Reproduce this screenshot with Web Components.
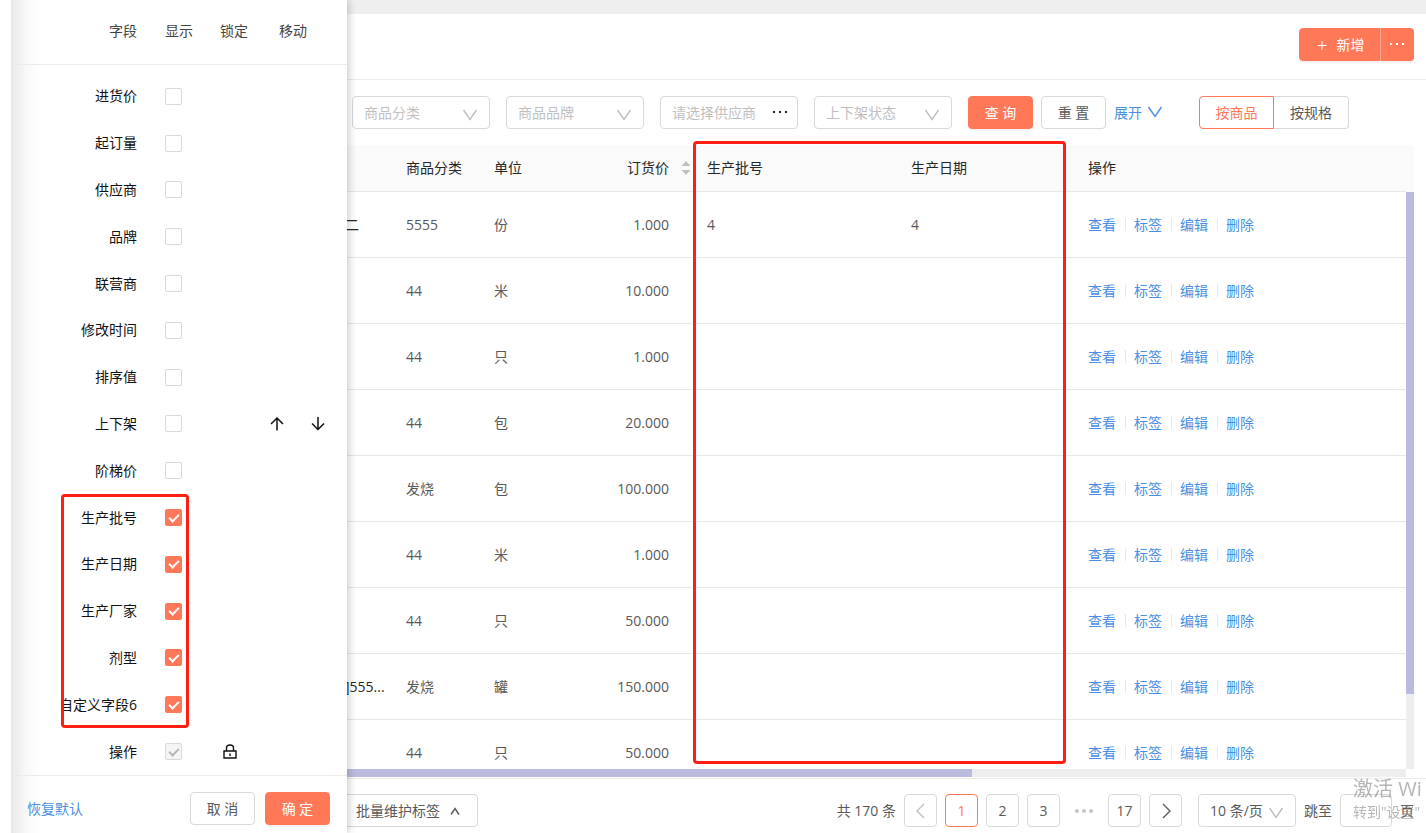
<!DOCTYPE html>
<html lang="zh-CN">
<head>
<meta charset="utf-8">
<meta name="viewport" content="width=device-width, initial-scale=1">
<title>商品列表</title>
<style>
	html, body {
		margin: 0;
		height: 100%;
	}
	body {
		--primary: #ff7858;
		--link: #4a90e2;
		--line: #e8e8e8;
		--border: #d9d9d9;
		--text: #595959;
		background: #fff;
		color: var(--text);
		font: 14px/20px "Open Sans", "Noto Sans CJK SC", sans-serif;
		overflow: hidden;
	}
</style>
</head>
<body>
<goods-app></goods-app>

<script>
class BaseElement extends HTMLElement {
	constructor() {
		super();

		this.attachShadow({ mode: "open" });
		this.shadowRoot.appendChild(this.constructor.template.content.cloneNode(true));
	}

	static get template() {
		const tmpl = document.createElement("template");
		tmpl.innerHTML = this.html;
		return tmpl;
	}
}

const ICONS = {
	down: `<path d="M.5 4 7 13.500l6.500-9.500"/>`,
	expand: `<path d="M.5 1 7 10.500 13.500 1"/>`,
	up: `<path d="M3 10.500 7 4.500l4 6"/>`,
	left: `<path d="M10 0 3 7l7 7"/>`,
	right: `<path d="M4 0l7 7-7 7"/>`,
	plus: `<path d="M7 3v9M2.500 7.500h9" stroke-width="1"/>`,
	arrowUp: `<path d="M7 13.500V1M1 7l6-6 6 6" stroke-width="1.500"/>`,
	arrowDown: `<path d="M7 0v12.500M1 6.500l6 6 6-6" stroke-width="1.500"/>`,
	lock: `<path d="M1 6h12v7H1zM3.500 6V3Q3.500 0 7 0t3.500 3v3M7 8.500V11" stroke-width="1.400"/>`,
	dots: `<path d="M0 5h2v2H0zM6 5h2v2H6zM12 5h2v2h-2z" fill="currentColor" stroke="none"/>`,
	ellipsis: `<g fill="currentColor" stroke="none"><circle cx="2" cy="7" r="2"/><circle cx="9" cy="7" r="2"/><circle cx="16" cy="7" r="2"/></g>`,
};

class UiIcon extends BaseElement {
	connectedCallback() {
		const name = this.getAttribute("name");
		const width = name === "ellipsis" ? 18 : 14;
		this.shadowRoot.querySelector("span").innerHTML =
			`<svg width="${width}" height="14" viewBox="0 0 ${width} 14" aria-hidden="true">${ICONS[name]}</svg>`;
	}

	static get html() {
		return /* html */`
		<style>
		:host { display: inline-flex; }
		span { display: flex; }
		svg {
			fill: none;
			stroke: currentColor;
			stroke-width: 1.4;
			overflow: visible;
		}
		</style>
		<span></span>`;
	}
}
customElements.define("ui-icon", UiIcon);

class UiButton extends BaseElement {
	connectedCallback() {
		const label = this.getAttribute("label");
		if (label) this.shadowRoot.querySelector("button").setAttribute("aria-label", label);
	}

	static get html() {
		return /* html */`
		<style>
		:host { display: inline-flex; height: 33px; }
		button {
			display: flex;
			align-items: center;
			justify-content: center;
			gap: 8px;
			width: 100%;
			height: 100%;
			box-sizing: border-box;
			padding: 0 15px;
			border: 1px solid var(--border);
			border-radius: 4px;
			background: #fff;
			color: var(--text);
			font: inherit;
			white-space: nowrap;
			cursor: pointer;
		}
		:host([kind="primary"]) button {
			border-color: var(--primary);
			background: var(--primary);
			color: #fff;
			box-shadow: 0 2px 2px rgba(0, 0, 0, 0.06);
		}
		:host([kind="outline"]) button {
			border-color: var(--primary);
			color: var(--primary);
		}
		:host([kind="link"]) button {
			border: 0;
			padding: 0;
			gap: 6px;
			background: none;
			color: var(--link);
		}
		:host([square]) { width: 33px; }
		:host([square]) button { padding: 0; }
		:host([wide]) { width: 65px; }
		:host([join="start"]) button { border-radius: 4px 0 0 4px; }
		:host([join="end"]) button { border-radius: 0 4px 4px 0; }
		:host([join="end"]:not([kind])) button { border-left: 0; }
		:host([join="end"][kind]) button { border-left-color: #ffa995; }
		:host([muted]) button { color: #bfbfbf; }
		</style>
		<button type="button"><slot></slot></button>`;
	}
}
customElements.define("ui-button", UiButton);

class UiSelect extends BaseElement {
	connectedCallback() {
		const select = this.shadowRoot.querySelector("select");
		select.setAttribute("aria-label", this.getAttribute("label"));
		select.add(new Option(this.getAttribute("text")));
	}

	static get html() {
		return /* html */`
		<style>
		:host { display: grid; align-items: center; width: 138px; height: 33px; color: #bfbfbf; }
		select, ui-icon { grid-area: 1 / 1; }
		select {
			appearance: none;
			width: 100%;
			height: 100%;
			box-sizing: border-box;
			margin: 0;
			padding: 0 11px;
			border: 1px solid var(--border);
			border-radius: 4px;
			background: #fff;
			color: inherit;
			font: inherit;
		}
		:host([dark]) { width: 98px; }
		:host([dark]) select { color: var(--text); }
		ui-icon { justify-self: end; margin-right: 13px; pointer-events: none; }
		</style>
		<select></select>
		<ui-icon name="down"></ui-icon>`;
	}
}
customElements.define("ui-select", UiSelect);

class SupplierPicker extends BaseElement {
	static get html() {
		return /* html */`
		<style>
		:host {
			display: flex;
			align-items: center;
			width: 138px;
			height: 33px;
			box-sizing: border-box;
			border: 1px solid var(--border);
			border-radius: 4px;
			padding: 0 10px 0 11px;
		}
		input {
			flex: 1;
			min-width: 0;
			border: 0;
			padding: 0;
			outline: 0;
			font: inherit;
		}
		input::placeholder { color: #bfbfbf; opacity: 1; }
		button { display: flex; border: 0; padding: 0; background: none; color: #222; }
		</style>
		<input type="text" placeholder="请选择供应商" aria-label="供应商">
		<button type="button" aria-label="选择供应商"><ui-icon name="dots"></ui-icon></button>`;
	}
}
customElements.define("supplier-picker", SupplierPicker);

// Red frame laid over the area its user wants to point out
class MarkBox extends BaseElement {
	static get html() {
		return /* html */`
		<style>
		:host {
			display: block;
			position: absolute;
			box-sizing: border-box;
			border: 3px solid #ff1e12;
			border-radius: 4px;
			pointer-events: none;
		}
		</style>`;
	}
}
customElements.define("mark-box", MarkBox);

class FieldRow extends BaseElement {
	connectedCallback() {
		const root = this.shadowRoot;
		const input = root.querySelector("input");
		root.querySelector("label").textContent = this.getAttribute("name");
		input.checked = this.hasAttribute("checked");
		input.disabled = this.hasAttribute("disabled");
	}

	static get html() {
		return /* html */`
		<style>
		:host {
			flex: 1;
			min-height: 0;
			display: grid;
			grid-template-columns: 126px 27px 20px 1fr;
			column-gap: 28px;
			align-items: center;
			color: #111;
		}
		label { text-align: right; white-space: nowrap; }
		input {
			appearance: none;
			display: grid;
			place-items: center;
			box-sizing: border-box;
			width: 17px;
			height: 17px;
			margin: 0;
			border: 1px solid var(--border);
			border-radius: 2px;
			background: #fff;
		}
		input:checked { border-color: var(--primary); background: var(--primary); }
		input:checked::before {
			content: "";
			width: 8px;
			height: 4px;
			border: solid #fff;
			border-width: 0 0 2px 2px;
			transform: translateY(-1px) rotate(-45deg);
		}
		input:disabled { border-color: var(--border); background: #f5f5f5; }
		input:disabled::before { border-color: #b8b8b8; }
		.lock { display: flex; justify-content: center; }
		.move { display: flex; gap: 23px; }
		::slotted(button) {
			display: flex;
			justify-content: center;
			width: 18px;
			padding: 0;
			border: 0;
			background: none;
			color: #111;
		}
		</style>
		<label for="show"></label>
		<input id="show" type="checkbox">
		<span class="lock"><slot name="lock"></slot></span>
		<span class="move"><slot name="move"></slot></span>`;
	}
}
customElements.define("field-row", FieldRow);

class FieldDrawer extends BaseElement {
	static get html() {
		return /* html */`
		<style>
		:host {
			display: flex;
			flex-direction: column;
			flex: none;
			width: 336px;
			margin-left: 11px;
			position: relative;
			z-index: 1;
			background: linear-gradient(to right, #e8e8e8, #f7f7f7 14px, #fff 28px);
			box-shadow: 2px 0 8px rgba(0, 0, 0, 0.2);
			clip-path: inset(0 -12px 0 0);
		}
		header {
			display: grid;
			grid-template-columns: 126px 27px 20px 1fr;
			column-gap: 28px;
			align-items: center;
			height: 62px;
			padding-bottom: 2px;
			border-bottom: 1px solid #ebebeb;
			color: #444;
			white-space: nowrap;
		}
		header span:first-child { text-align: right; }
		header span:last-child { padding-left: 11px; }
		.fields {
			flex: 1;
			min-height: 0;
			display: flex;
			flex-direction: column;
			padding-top: 8px;
		}
		.custom {
			flex: 5;
			display: flex;
			flex-direction: column;
			position: relative;
		}
		mark-box { inset: 0 158px 0 50px; }
		footer {
			display: flex;
			align-items: center;
			gap: 10px;
			height: 33px;
			padding: 16px 17px 8px 16px;
			border-top: 1px solid #ebebeb;
		}
		footer a { margin-right: auto; color: var(--link); text-decoration: none; }
		</style>
		<header>
			<span>字段</span><span>显示</span><span>锁定</span><span>移动</span>
		</header>
		<div class="fields">
			<field-row name="进货价"></field-row>
			<field-row name="起订量"></field-row>
			<field-row name="供应商"></field-row>
			<field-row name="品牌"></field-row>
			<field-row name="联营商"></field-row>
			<field-row name="修改时间"></field-row>
			<field-row name="排序值"></field-row>
			<field-row name="上下架">
				<button slot="move" type="button" aria-label="上移"><ui-icon name="arrowUp"></ui-icon></button>
				<button slot="move" type="button" aria-label="下移"><ui-icon name="arrowDown"></ui-icon></button>
			</field-row>
			<field-row name="阶梯价"></field-row>
			<div class="custom">
				<field-row name="生产批号" checked></field-row>
				<field-row name="生产日期" checked></field-row>
				<field-row name="生产厂家" checked></field-row>
				<field-row name="剂型" checked></field-row>
				<field-row name="自定义字段6" checked></field-row>
				<mark-box></mark-box>
			</div>
			<field-row name="操作" checked disabled>
				<button slot="lock" type="button" aria-label="锁定"><ui-icon name="lock"></ui-icon></button>
			</field-row>
		</div>
		<footer>
			<a href="#reset">恢复默认</a>
			<ui-button wide>取 消</ui-button>
			<ui-button wide kind="primary">确 定</ui-button>
		</footer>`;
	}
}
customElements.define("field-drawer", FieldDrawer);

class FilterBar extends BaseElement {
	static get html() {
		return /* html */`
		<style>
		:host {
			display: flex;
			align-items: center;
			gap: 16px;
			padding: 16px 12px 16px 5px;
		}
		.actions { display: flex; gap: 8px; }
		.switch { display: flex; margin-left: 21px; }
		.switch ui-button { width: 75px; }
		</style>
		<ui-select label="商品分类" text="商品分类"></ui-select>
		<ui-select label="商品品牌" text="商品品牌"></ui-select>
		<supplier-picker></supplier-picker>
		<ui-select label="上下架状态" text="上下架状态"></ui-select>
		<div class="actions">
			<ui-button wide kind="primary">查 询</ui-button>
			<ui-button wide>重 置</ui-button>
			<ui-button kind="link">展开<ui-icon name="expand"></ui-icon></ui-button>
		</div>
		<div class="switch">
			<ui-button kind="outline" join="start">按商品</ui-button>
			<ui-button join="end">按规格</ui-button>
		</div>`;
	}
}
customElements.define("filter-bar", FilterBar);

class GoodsTable extends BaseElement {
	connectedCallback() {
		const rows = [
			["二", "5555", "份", "1.000", "4", "4"],
			["", "44", "米", "10.000", "", ""],
			["", "44", "只", "1.000", "", ""],
			["", "44", "包", "20.000", "", ""],
			["", "发烧", "包", "100.000", "", ""],
			["", "44", "米", "1.000", "", ""],
			["", "44", "只", "50.000", "", ""],
			["]555...", "发烧", "罐", "150.000", "", ""],
			["", "44", "只", "50.000", "", ""],
		];
		const links = ["查看", "标签", "编辑", "删除"].map((t) => `<a href="#">${t}</a>`).join("");

		this.shadowRoot.querySelector("tbody").innerHTML = rows.map((row) => `
			<tr>${row.map((cell) => `<td>${cell}</td>`).join("")}<td><div class="links">${links}</div></td></tr>
		`).join("");
	}

	static get html() {
		return /* html */`
		<style>
		:host {
			flex: 1;
			min-height: 0;
			display: grid;
			grid-template: 47px 1fr 8px / 1fr 8px;
			margin-right: 12px;
			position: relative;
		}
		.view { grid-area: 1 / 1 / 3 / 2; overflow: hidden; min-height: 0; }
		.corner { background: #fafafa; border-radius: 0 4px 0 0; }
		.vbar, .hbar { background: #eee; }
		.vbar { grid-area: 2 / 2; }
		.hbar { grid-area: 3 / 1; }
		.vbar div { height: 87%; background: #bbbbdd; }
		.hbar div { width: 59%; height: 100%; background: #bbbbdd; }
		/* scrolled 2px to the left */
		table {
			width: calc(100% + 2px);
			margin-left: -2px;
			table-layout: fixed;
			border-collapse: separate;
			border-spacing: 0;
		}
		th, td {
			box-sizing: border-box;
			padding: 0 8px;
			border-bottom: 1px solid var(--line);
			text-align: left;
			font-weight: 400;
			white-space: nowrap;
		}
		th { height: 47px; background: #fafafa; color: #262626; }
		td { height: 66px; }
		td:first-child { padding: 0; color: #262626; }
		td:nth-child(4) { padding-right: 30px; text-align: right; }
		.sort { display: flex; align-items: center; justify-content: flex-end; gap: 12px; }
		.sort svg { width: 10px; height: 14px; fill: #bfbfbf; }
		.links { display: flex; align-items: center; }
		.links a { color: var(--link); text-decoration: none; }
		.links a + a::before {
			content: "";
			display: inline-block;
			width: 1px;
			height: 13px;
			margin: 0 8px 0 9px;
			background: var(--line);
			vertical-align: -1px;
		}
		mark-box { left: 346px; top: -4px; bottom: 13px; width: 373px; }
		</style>
		<div class="view">
			<table>
				<colgroup>
					<col style="width: 53px"><col style="width: 88px"><col style="width: 88px"><col style="width: 125px">
					<col style="width: 204px"><col style="width: 177px"><col>
				</colgroup>
				<thead>
					<tr>
						<th></th>
						<th>商品分类</th>
						<th>单位</th>
						<th><div class="sort">订货价<svg viewBox="0 0 10 14" aria-hidden="true"><path d="M5 0l4.500 5h-9zM5 14l4.500-5h-9z"/></svg></div></th>
						<th>生产批号</th>
						<th>生产日期</th>
						<th>操作</th>
					</tr>
				</thead>
				<tbody></tbody>
			</table>
		</div>
		<div class="corner"></div>
		<div class="vbar"><div></div></div>
		<div class="hbar"><div></div></div>
		<mark-box></mark-box>`;
	}
}
customElements.define("goods-table", GoodsTable);

class PageBar extends BaseElement {
	static get html() {
		return /* html */`
		<style>
		:host {
			display: flex;
			align-items: center;
			gap: 8px;
			height: 33px;
			margin-top: 1px;
			padding: 15px 12px 6px 0;
			border-top: 1px solid #ebebeb;
		}
		.bulk { margin: 0 auto 0 -7px; }
		ol {
			display: flex;
			align-items: center;
			gap: 8px;
			margin: 0 8px 0 0;
			padding: 0;
			list-style: none;
		}
		li { display: flex; }
		.more { width: 32px; justify-content: center; color: #c4c4c4; }
		label { display: flex; align-items: center; gap: 8px; }
		input {
			width: 52px;
			height: 33px;
			box-sizing: border-box;
			border: 1px solid var(--border);
			border-radius: 4px;
			font: inherit;
		}
		</style>
		<ui-button class="bulk">批量维护标签<ui-icon name="up"></ui-icon></ui-button>
		<span>共 170 条</span>
		<ol>
			<li><ui-button square muted label="上一页"><ui-icon name="left"></ui-icon></ui-button></li>
			<li><ui-button square kind="outline">1</ui-button></li>
			<li><ui-button square>2</ui-button></li>
			<li><ui-button square>3</ui-button></li>
			<li class="more"><ui-icon name="ellipsis"></ui-icon></li>
			<li><ui-button square>17</ui-button></li>
			<li><ui-button square label="下一页"><ui-icon name="right"></ui-icon></ui-button></li>
		</ol>
		<ui-select dark label="每页条数" text="10 条/页"></ui-select>
		<label>跳至<input type="text">页</label>`;
	}
}
customElements.define("page-bar", PageBar);

class SystemNotice extends BaseElement {
	static get html() {
		return /* html */`
		<style>
		:host {
			position: fixed;
			right: 0;
			bottom: 11px;
			z-index: 2;
			width: 73px;
			overflow: hidden;
			color: rgba(120, 120, 120, 0.55);
			white-space: nowrap;
			pointer-events: none;
		}
		strong { display: block; font-weight: 400; font-size: 20px; line-height: 26px; }
		</style>
		<strong>激活 Wi</strong>
		<span>转到"设置"</span>`;
	}
}
customElements.define("system-notice", SystemNotice);

class GoodsApp extends BaseElement {
	static get html() {
		return /* html */`
		<style>
		:host { display: flex; height: 100vh; }
		main {
			flex: 1;
			min-width: 0;
			display: flex;
			flex-direction: column;
			border-top: 14px solid #efefef;
		}
		.top {
			display: flex;
			justify-content: flex-end;
			padding: 14px 12px 18px;
			border-bottom: 1px solid #ebebeb;
		}
		.top ui-button:first-child { width: 81px; }
		.top ui-button:last-child { width: 34px; }
		</style>
		<field-drawer></field-drawer>
		<main>
			<div class="top">
				<ui-button kind="primary" join="start"><ui-icon name="plus"></ui-icon>新增</ui-button>
				<ui-button kind="primary" join="end" square label="更多"><ui-icon name="dots"></ui-icon></ui-button>
			</div>
			<filter-bar></filter-bar>
			<goods-table></goods-table>
			<page-bar></page-bar>
		</main>
		<system-notice></system-notice>`;
	}
}
customElements.define("goods-app", GoodsApp);
</script>
</body>
</html>
